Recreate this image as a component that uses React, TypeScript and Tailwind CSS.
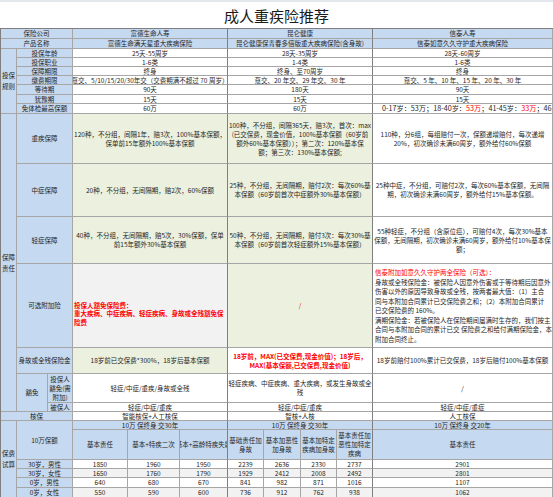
import React from "react";

const blue = "bg-[#c5d9f1]";
const green = "bg-[#ebf1de]";
const gray = "bg-[#f2f2f2]";
const hr = "border-r-[#7f7f7f]";

function Cell({ cls = "", children }: { cls?: string; children?: React.ReactNode }) {
  return (
    <div
      className={`flex items-center justify-center overflow-hidden text-center border-r border-b border-[#a6a6a6] ${cls}`}
    >
      {children}
    </div>
  );
}

function Lines({ lines, cls = "" }: { lines: React.ReactNode[]; cls?: string }) {
  return (
    <div className={cls}>
      {lines.map((l, i) => (
        <div key={i} className="whitespace-nowrap">
          {l}
        </div>
      ))}
    </div>
  );
}

const red = "text-[#ff0000]";

const prices = [
  ["30岁，男性", "1850", "1960", "1950", "2239", "2636", "2330", "2737", "2901"],
  ["30岁，女性", "1650", "1760", "1790", "1929", "2412", "2008", "2492", "2801"],
  ["0岁，男性", "640", "680", "670", "841", "982", "871", "1016", "1107"],
  ["0岁，女性", "550", "590", "600", "736", "912", "762", "938", "1062"],
];

const basic = [
  ["投保年龄", "25天-55周岁", "28天-35周岁", "28天-60周岁"],
  ["投保职业", "1-6类", "1-4类", "1-6类"],
  ["保障期限", "终身", "终身、至70周岁", "终身"],
  ["缴费期限", "趸交、5/10/15/20/30年交（交费期满不超过 70 周岁）", "趸交、20 年交、29 年交、30 年", "趸交、5 年、10 年、15 年、20 年、30 年"],
  ["等待期", "90天", "180天", "90天"],
  ["犹豫期", "15天", "15天", "15天"],
];

export default function App() {
  return (
    <div className="w-[553px] h-[497px] overflow-hidden bg-white text-[#262626] font-['Noto_Sans_CJK_SC','Noto_Sans',sans-serif] text-[6.5px] leading-[9px]">
      {/* 标题 */}
      <div className="h-[28px] flex items-center justify-center text-[15px] leading-none text-[#1a1a1a] border-t-2 border-[#e3e8ee]">
        成人重疾险推荐
      </div>

      <div className="grid grid-cols-[16px_31px_25px_55px_52px_48px_36px_37px_36px_36px_180px] grid-rows-[10px_10px_9px_9px_9px_9px_10px_9px_10px_50px_53px_47px_84px_26px_29px_9px_9px_9px_30px_9px_9px_10px_10px] border-l border-t border-[#7f7f7f]">
        {/* 表头 */}
        <Cell cls={`col-span-3 ${blue}`}>保险公司</Cell>
        <Cell cls={`col-span-3 ${blue} ${hr}`}>富德生命人寿</Cell>
        <Cell cls={`col-span-4 ${blue} ${hr}`}>昆仑健康</Cell>
        <Cell cls={blue}>信泰人寿</Cell>

        <Cell cls={`col-span-3 ${blue}`}>产品名称</Cell>
        <Cell cls={`col-span-3 ${blue} ${hr}`}>富德生命满天星重大疾病保险</Cell>
        <Cell cls={`col-span-4 ${blue} ${hr}`}>昆仑健康保青春多倍版重大疾病保险(含身故)</Cell>
        <Cell cls={blue}>信泰如意久久守护重大疾病保险</Cell>

        {/* 投保规则 */}
        <Cell cls={`row-span-7 ${blue}`}>
          <Lines lines={["投保", "规则"]} cls="leading-[11px]" />
        </Cell>
        {basic.map((r) => (
          <React.Fragment key={r[0]}>
            <Cell cls={`col-span-2 ${blue}`}>{r[0]}</Cell>
            <Cell cls={`col-span-3 whitespace-nowrap ${hr}`}>{r[1]}</Cell>
            <Cell cls={`col-span-4 whitespace-nowrap ${hr}`}>{r[2]}</Cell>
            <Cell cls="whitespace-nowrap">{r[3]}</Cell>
          </React.Fragment>
        ))}
        <Cell cls={`col-span-2 ${blue}`}>
          <span className="whitespace-nowrap">免体检最高保额</span>
        </Cell>
        <Cell cls={`col-span-3 ${hr}`}>60万</Cell>
        <Cell cls={`col-span-4 ${hr}`}>60万</Cell>
        <Cell cls="justify-start pl-[9px] whitespace-nowrap text-[7.2px]">
          0-17岁：53万；18-40岁：<span className={red}>53万</span>；41-45岁：<span className={red}>33万</span>；46-
        </Cell>

        {/* 保障责任 */}
        <Cell cls={`row-span-7 ${blue}`}>
          <Lines lines={["保障", "责任"]} cls="leading-[11px]" />
        </Cell>

        <Cell cls={`col-span-2 ${blue}`}>重疾保障</Cell>
        <Cell cls={`col-span-3 ${green} ${hr}`}>
          <Lines lines={["120种，不分组，间隔1年，赔3次，100%基本保额，", "保单前15年额外100%基本保额"]} />
        </Cell>
        <Cell cls={`col-span-4 ${green} ${hr}`}>
          <Lines
            lines={[
              "100种，不分组，间隔365天，赔3次，首次：max",
              "(已交保费，现金价值，100%基本保额（60岁前",
              "额外60%基本保额））；第二次：120%基本保",
              "额；第三次：130%基本保额;",
            ]}
          />
        </Cell>
        <Cell>
          <Lines lines={["110种，分6组，每组赔付一次，保额递增赔付，每次递增", "20%，初次确诊未满60周岁，额外给付60%保额"]} />
        </Cell>

        <Cell cls={`col-span-2 ${blue}`}>中症保障</Cell>
        <Cell cls={`col-span-3 ${green} ${hr}`}>20种，不分组，无间隔期，赔2次，60%保额</Cell>
        <Cell cls={`col-span-4 ${green} ${hr}`}>
          <Lines lines={["25种，不分组，无间隔期，赔付2次：每次60%基", "本保额（60岁前首次中症额外30%基本保额）"]} />
        </Cell>
        <Cell>
          <Lines lines={["25种中症，不分组，可赔付2次，每次60%基本保额，无间隔", "期，初次确诊未满60周岁，额外给付15%基本保额。"]} />
        </Cell>

        <Cell cls={`col-span-2 ${blue}`}>轻症保障</Cell>
        <Cell cls={`col-span-3 ${green} ${hr}`}>
          <Lines lines={["40种，不分组，无间隔期，赔5次，30%保额，保单", "前15年额外30%基本保额"]} />
        </Cell>
        <Cell cls={`col-span-4 ${green} ${hr}`}>
          <Lines lines={["50种，不分组，无间隔期，赔付3次：每次30%基", "本保额（60岁前首次轻症额外15%基本保额）"]} />
        </Cell>
        <Cell>
          <Lines
            lines={[
              "55种轻症，不分组（含原位癌），可赔付4次，每次30%基本",
              "保额，无间隔期，初次确诊未满60周岁，额外给付10%基本保",
              "额；",
            ]}
          />
        </Cell>

        <Cell cls={`col-span-2 ${blue}`}>可选附加险</Cell>
        <Cell cls={`col-span-3 justify-start text-left pl-[1px] pt-[16px] ${gray} ${hr}`}>
          <Lines
            cls={`${red} font-bold leading-[8.5px]`}
            lines={["投保人豁免保险费：", "重大疾病、中症疾病、轻症疾病、身故或全残豁免保", "险费"]}
          />
        </Cell>
        <Cell cls={`col-span-4 ${green} ${hr}`}>
          <span className={red}>/</span>
        </Cell>
        <Cell cls="justify-start text-left pl-[2px] pt-[1px]">
          <Lines
            cls="leading-[9.5px]"
            lines={[
              <span className={red}>信泰附加如意久久守护两全保险（可选）：</span>,
              "身故或全残保险金：被保险人因意外伤害或于等待期后因意外",
              "伤害以外的原因导致身故或全残，按两者最大值：（1）主合",
              "同与本附加合同累计已交保险费之和；（2）本附加合同累计",
              "已交保险费的 160%。",
              "满期保险金：若被保险人在保险期间届满时生存的，我们按主",
              "合同与本附加合同的累计已交 保险费之和给付满期保险金，本",
              "附加合同终止。",
            ]}
          />
        </Cell>

        <Cell cls={`col-span-2 ${blue}`}>
          <span className="whitespace-nowrap">身故或全残保险金</span>
        </Cell>
        <Cell cls={`col-span-3 ${green} ${hr}`}>18岁前已交保费*300%，18岁后基本保额</Cell>
        <Cell cls={`col-span-4 ${hr}`}>
          <Lines
            cls={`${red} font-bold`}
            lines={["18岁前，MAX(已交保费,现金价值)；18岁后，", "MAX(基本保额,已交保费,现金价值)"]}
          />
        </Cell>
        <Cell>18岁前赔付100%累计已交保费，18岁后赔付100%基本保额</Cell>

        <Cell cls={`row-span-2 ${blue}`}>豁免</Cell>
        <Cell cls={blue}>
          <Lines lines={["投保人", "豁免(需", "附加)"]} />
        </Cell>
        <Cell cls={`col-span-3 ${hr}`}>轻症/中症/重疾/身故或全残</Cell>
        <Cell cls={`col-span-4 ${hr}`}>
          <Lines lines={["轻症疾病、中症疾病、重大疾病，或发生身故或全", "残"]} />
        </Cell>
        <Cell>/</Cell>

        <Cell cls={blue}>被保人</Cell>
        <Cell cls={`col-span-3 ${hr}`}>轻症/中症/重疾</Cell>
        <Cell cls={`col-span-4 ${hr}`}>轻症/中症/重疾</Cell>
        <Cell>轻症/中症/重症</Cell>

        {/* 核保 */}
        <Cell cls={`col-span-3 ${blue}`}>核保</Cell>
        <Cell cls={`col-span-3 ${hr}`}>智能核保+人工核保</Cell>
        <Cell cls={`col-span-4 ${hr}`}>智核+人核</Cell>
        <Cell>人工核保</Cell>

        {/* 保费试算 */}
        <Cell cls={`row-span-6 ${blue}`}>
          <Lines lines={["保费", "试算"]} cls="leading-[11px]" />
        </Cell>
        <Cell cls={`col-span-2 row-span-2 ${blue}`}>10万保额</Cell>
        <Cell cls={`col-span-3 ${blue} ${hr}`}>10万 保终身 交30年</Cell>
        <Cell cls={`col-span-4 ${blue} ${hr}`}>10万 保终身 交30年</Cell>
        <Cell cls={blue}>10万 保终身 交20年</Cell>

        <Cell cls={blue}>基本责任</Cell>
        <Cell cls={`${blue} whitespace-nowrap`}>基本+特疾二次</Cell>
        <Cell cls={`${blue} ${hr} whitespace-nowrap`}>基本+高龄特疾失能</Cell>
        <Cell cls={blue}>
          <Lines lines={["基础责任加", "身故"]} />
        </Cell>
        <Cell cls={blue}>
          <Lines lines={["基本加恶性", "加身故"]} />
        </Cell>
        <Cell cls={blue}>
          <Lines lines={["基本加特定", "疾病加身故"]} />
        </Cell>
        <Cell cls={`${blue} ${hr}`}>
          <Lines lines={["基本责任加", "恶性加特定", "疾病"]} />
        </Cell>
        <Cell cls={blue}>基本责任</Cell>

        {prices.map((r, i) => {
          const bg = i % 2 === 1 ? gray : "bg-white";
          return (
            <React.Fragment key={r[0]}>
              <Cell cls={`col-span-2 ${blue}`}>{r[0]}</Cell>
              <Cell cls={bg}>{r[1]}</Cell>
              <Cell cls={bg}>{r[2]}</Cell>
              <Cell cls={`${bg} ${hr}`}>{r[3]}</Cell>
              <Cell cls={bg}>{r[4]}</Cell>
              <Cell cls={bg}>{r[5]}</Cell>
              <Cell cls={bg}>{r[6]}</Cell>
              <Cell cls={`${bg} ${hr}`}>{r[7]}</Cell>
              <Cell cls={bg}>{r[8]}</Cell>
            </React.Fragment>
          );
        })}
      </div>
    </div>
  );
}
